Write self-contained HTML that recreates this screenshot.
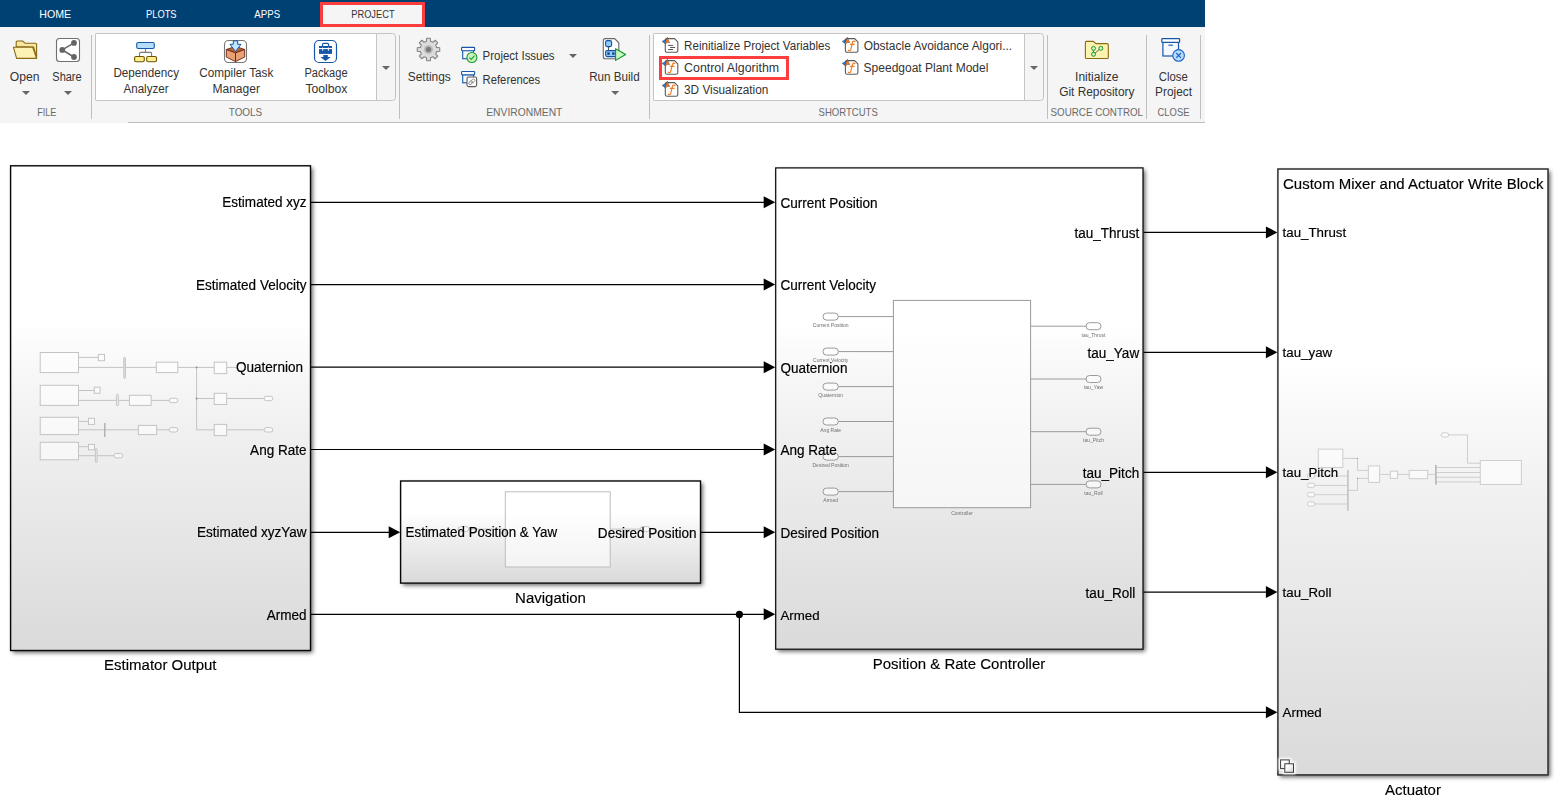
<!DOCTYPE html>
<html><head><meta charset="utf-8"><title>Project</title>
<style>
html,body{margin:0;padding:0;background:#fff;}
body{width:1563px;height:808px;overflow:hidden;font-family:"Liberation Sans",sans-serif;}
svg{position:absolute;left:0;top:0;display:block}
svg text{font-family:"Liberation Sans",sans-serif;}
</style></head><body>
<svg width="1563" height="808" viewBox="0 0 1563 808" style="will-change:transform">
<defs>
<linearGradient id="bg" x1="0" y1="0" x2="0" y2="1"><stop offset="0" stop-color="#fff"/><stop offset="0.32" stop-color="#fff"/><stop offset="0.45" stop-color="#f6f6f6"/><stop offset="0.57" stop-color="#efefef"/><stop offset="0.78" stop-color="#e5e5e5"/><stop offset="1" stop-color="#dadada"/></linearGradient>
<filter id="sh" x="-5%" y="-5%" width="115%" height="115%"><feDropShadow dx="2.2" dy="2.2" stdDeviation="2.1" flood-color="#000" flood-opacity="0.62"/></filter>
</defs>
<rect x="10.6" y="165.8" width="299.9" height="484.7" fill="url(#bg)" stroke="none" filter="url(#sh)"/>
<rect x="400.6" y="481.0" width="299.9" height="102.1" fill="url(#bg)" stroke="none" filter="url(#sh)"/>
<rect x="775.7" y="167.9" width="367.3" height="481.3" fill="url(#bg)" stroke="none" filter="url(#sh)"/>
<rect x="1277.9" y="169" width="270.1" height="605.9" fill="url(#bg)" stroke="none" filter="url(#sh)"/>
<g>
<path d="M78.5 357.4 H98.3" fill="none" stroke="#c4c4c4" stroke-width="1"/>
<path d="M78.5 367.4 H156.3" fill="none" stroke="#c4c4c4" stroke-width="1"/>
<path d="M177.8 367.4 H214.2" fill="none" stroke="#c4c4c4" stroke-width="1"/>
<path d="M226.7 367.4 H236" fill="none" stroke="#c4c4c4" stroke-width="1"/>
<path d="M196.6 367.4 V429.8" fill="none" stroke="#c4c4c4" stroke-width="1"/>
<path d="M196.6 398.5 H214.2" fill="none" stroke="#c4c4c4" stroke-width="1"/>
<path d="M226.7 398.5 H264.1" fill="none" stroke="#c4c4c4" stroke-width="1"/>
<path d="M196.6 429.8 H214.2" fill="none" stroke="#c4c4c4" stroke-width="1"/>
<path d="M226.7 429.8 H264.1" fill="none" stroke="#c4c4c4" stroke-width="1"/>
<path d="M78.5 390.5 H94.3" fill="none" stroke="#c4c4c4" stroke-width="1"/>
<path d="M78.5 400.4 H129.4" fill="none" stroke="#c4c4c4" stroke-width="1"/>
<path d="M151.1 400.4 H169.3" fill="none" stroke="#c4c4c4" stroke-width="1"/>
<path d="M78.5 421.4 H88.5" fill="none" stroke="#c4c4c4" stroke-width="1"/>
<path d="M78.5 429.8 H138.4" fill="none" stroke="#c4c4c4" stroke-width="1"/>
<path d="M156.7 429.8 H169.3" fill="none" stroke="#c4c4c4" stroke-width="1"/>
<path d="M78.5 446.7 H88.5" fill="none" stroke="#c4c4c4" stroke-width="1"/>
<path d="M78.5 455.7 H114" fill="none" stroke="#c4c4c4" stroke-width="1"/>
<rect x="40.2" y="352.5" width="38.3" height="20.1" rx="0" fill="rgba(255,255,255,0.55)" stroke="#c4c4c4" stroke-width="1"/>
<rect x="40.2" y="385.3" width="38.3" height="20.1" rx="0" fill="rgba(255,255,255,0.55)" stroke="#c4c4c4" stroke-width="1"/>
<rect x="40.2" y="417.3" width="38.3" height="17.3" rx="0" fill="rgba(255,255,255,0.55)" stroke="#c4c4c4" stroke-width="1"/>
<rect x="40.2" y="442.3" width="38.3" height="17.5" rx="0" fill="rgba(255,255,255,0.55)" stroke="#c4c4c4" stroke-width="1"/>
<rect x="98.3" y="354.4" width="6.2" height="6.3" rx="0" fill="rgba(255,255,255,0.55)" stroke="#c4c4c4" stroke-width="1"/>
<rect x="94.3" y="387.2" width="5.7" height="6.1" rx="0" fill="rgba(255,255,255,0.55)" stroke="#c4c4c4" stroke-width="1"/>
<rect x="88.5" y="418.3" width="6.0" height="6.1" rx="0" fill="rgba(255,255,255,0.55)" stroke="#c4c4c4" stroke-width="1"/>
<rect x="88.5" y="444.4" width="6.0" height="5.4" rx="0" fill="rgba(255,255,255,0.55)" stroke="#c4c4c4" stroke-width="1"/>
<rect x="156.3" y="362.2" width="21.5" height="10.4" rx="0" fill="rgba(255,255,255,0.55)" stroke="#c4c4c4" stroke-width="1"/>
<rect x="129.4" y="395.3" width="21.7" height="10.1" rx="0" fill="rgba(255,255,255,0.55)" stroke="#c4c4c4" stroke-width="1"/>
<rect x="138.4" y="425.4" width="18.3" height="9.2" rx="0" fill="rgba(255,255,255,0.55)" stroke="#c4c4c4" stroke-width="1"/>
<rect x="214.2" y="362.2" width="12.5" height="11.4" rx="0" fill="rgba(255,255,255,0.55)" stroke="#c4c4c4" stroke-width="1"/>
<rect x="214.2" y="393.3" width="12.5" height="11.2" rx="0" fill="rgba(255,255,255,0.55)" stroke="#c4c4c4" stroke-width="1"/>
<rect x="214.2" y="424.4" width="12.5" height="11.2" rx="0" fill="rgba(255,255,255,0.55)" stroke="#c4c4c4" stroke-width="1"/>
<rect x="123.8" y="357.3" width="1.6" height="21.1" rx="0.8" fill="#e4e4e4" stroke="#c4c4c4" stroke-width="1"/>
<rect x="116.4" y="394.3" width="2.0" height="11.5" rx="1" fill="#eee" stroke="#c4c4c4" stroke-width="1"/>
<path d="M104.8 423.1 V436.9" fill="none" stroke="#aaa" stroke-width="1.3"/>
<rect x="95.3" y="448.6" width="1.8" height="13.8" rx="0.9" fill="#eee" stroke="#c4c4c4" stroke-width="1"/>
<rect x="169.3" y="398.2" width="8.5" height="4.4" rx="2.2" fill="rgba(255,255,255,0.55)" stroke="#c4c4c4" stroke-width="1"/>
<rect x="169.3" y="427.6" width="8.5" height="4.4" rx="2.2" fill="rgba(255,255,255,0.55)" stroke="#c4c4c4" stroke-width="1"/>
<rect x="264.1" y="396.3" width="8.7" height="4.4" rx="2.2" fill="rgba(255,255,255,0.55)" stroke="#c4c4c4" stroke-width="1"/>
<rect x="264.1" y="427.6" width="8.7" height="4.4" rx="2.2" fill="rgba(255,255,255,0.55)" stroke="#c4c4c4" stroke-width="1"/>
<rect x="114.0" y="453.5" width="8.7" height="4.4" rx="2.2" fill="rgba(255,255,255,0.55)" stroke="#c4c4c4" stroke-width="1"/>
<circle cx="196.6" cy="367.4" r="0.9" fill="#888"/>
<circle cx="196.6" cy="398.5" r="0.9" fill="#888"/>
</g>
<path d="M468.6 529.1 H505.3" fill="none" stroke="#c4c4c4" stroke-width="1"/>
<path d="M610.2 529.1 H640.2" fill="none" stroke="#c4c4c4" stroke-width="1"/>
<rect x="458.0" y="526.6" width="10.6" height="5.0" rx="2.5" fill="rgba(255,255,255,0.55)" stroke="#c4c4c4" stroke-width="1"/>
<rect x="640.2" y="526.6" width="9.7" height="5.0" rx="2.5" fill="rgba(255,255,255,0.55)" stroke="#c4c4c4" stroke-width="1"/>
<rect x="505.3" y="491.8" width="104.9" height="75.2" rx="0" fill="rgba(255,255,255,0.6)" stroke="#bdbdbd" stroke-width="1"/>
<path d="M838.3 316.6 H893.4" fill="none" stroke="#9a9a9a" stroke-width="1"/>
<rect x="823.0" y="313.1" width="15.3" height="7.0" rx="3.5" fill="rgba(255,255,255,0.55)" stroke="#9a9a9a" stroke-width="1"/>
<path d="M838.3 351.6 H893.4" fill="none" stroke="#9a9a9a" stroke-width="1"/>
<rect x="823.0" y="348.1" width="15.3" height="7.0" rx="3.5" fill="rgba(255,255,255,0.55)" stroke="#9a9a9a" stroke-width="1"/>
<path d="M838.3 386.6 H893.4" fill="none" stroke="#9a9a9a" stroke-width="1"/>
<rect x="823.0" y="383.1" width="15.3" height="7.0" rx="3.5" fill="rgba(255,255,255,0.55)" stroke="#9a9a9a" stroke-width="1"/>
<path d="M838.3 421.5 H893.4" fill="none" stroke="#9a9a9a" stroke-width="1"/>
<rect x="823.0" y="418.0" width="15.3" height="7.0" rx="3.5" fill="rgba(255,255,255,0.55)" stroke="#9a9a9a" stroke-width="1"/>
<path d="M838.3 456.6 H893.4" fill="none" stroke="#9a9a9a" stroke-width="1"/>
<rect x="823.0" y="453.1" width="15.3" height="7.0" rx="3.5" fill="rgba(255,255,255,0.55)" stroke="#9a9a9a" stroke-width="1"/>
<path d="M838.3 491.6 H893.4" fill="none" stroke="#9a9a9a" stroke-width="1"/>
<rect x="823.0" y="488.1" width="15.3" height="7.0" rx="3.5" fill="rgba(255,255,255,0.55)" stroke="#9a9a9a" stroke-width="1"/>
<path d="M1030.6 326.2 H1086" fill="none" stroke="#9a9a9a" stroke-width="1"/>
<rect x="1086.0" y="322.7" width="15.0" height="7.0" rx="3.5" fill="rgba(255,255,255,0.55)" stroke="#9a9a9a" stroke-width="1"/>
<path d="M1030.6 379.0 H1086" fill="none" stroke="#9a9a9a" stroke-width="1"/>
<rect x="1086.0" y="375.5" width="15.0" height="7.0" rx="3.5" fill="rgba(255,255,255,0.55)" stroke="#9a9a9a" stroke-width="1"/>
<path d="M1030.6 431.7 H1086" fill="none" stroke="#9a9a9a" stroke-width="1"/>
<rect x="1086.0" y="428.2" width="15.0" height="7.0" rx="3.5" fill="rgba(255,255,255,0.55)" stroke="#9a9a9a" stroke-width="1"/>
<path d="M1030.6 484.4 H1086" fill="none" stroke="#9a9a9a" stroke-width="1"/>
<rect x="1086.0" y="480.9" width="15.0" height="7.0" rx="3.5" fill="rgba(255,255,255,0.55)" stroke="#9a9a9a" stroke-width="1"/>
<rect x="893.4" y="300.4" width="137.2" height="207.3" rx="0" fill="rgba(255,255,255,0.6)" stroke="#9a9a9a" stroke-width="1"/>
<text x="830.7" y="326.90000000000003" font-size="5" fill="#6f6f6f" text-anchor="middle">Current Position</text>
<text x="830.7" y="361.90000000000003" font-size="5" fill="#6f6f6f" text-anchor="middle">Current Velocity</text>
<text x="830.7" y="396.90000000000003" font-size="5" fill="#6f6f6f" text-anchor="middle">Quaternion</text>
<text x="830.7" y="431.8" font-size="5" fill="#6f6f6f" text-anchor="middle">Ang Rate</text>
<text x="830.7" y="466.90000000000003" font-size="5" fill="#6f6f6f" text-anchor="middle">Desired Position</text>
<text x="830.7" y="501.90000000000003" font-size="5" fill="#6f6f6f" text-anchor="middle">Armed</text>
<text x="1093.5" y="336.5" font-size="5" fill="#6f6f6f" text-anchor="middle">tau_Thrust</text>
<text x="1093.5" y="389.3" font-size="5" fill="#6f6f6f" text-anchor="middle">tau_Yaw</text>
<text x="1093.5" y="442.0" font-size="5" fill="#6f6f6f" text-anchor="middle">tau_Pitch</text>
<text x="1093.5" y="494.7" font-size="5" fill="#6f6f6f" text-anchor="middle">tau_Roll</text>
<text x="962" y="514.6" font-size="5" fill="#6f6f6f" text-anchor="middle">Controller</text>
<path d="M1342.8 458.4 H1357.5 V470.4 H1368.4" fill="none" stroke="#cecece" stroke-width="1"/>
<path d="M1347.9 490.4 H1357.5 V478.4 H1368.4" fill="none" stroke="#cecece" stroke-width="1"/>
<path d="M1314.8 476 H1347.9" fill="none" stroke="#cecece" stroke-width="1"/>
<rect x="1307.3" y="473.8" width="7.5" height="4.4" rx="2.2" fill="rgba(255,255,255,0.55)" stroke="#cecece" stroke-width="1"/>
<path d="M1314.8 485.4 H1347.9" fill="none" stroke="#cecece" stroke-width="1"/>
<rect x="1307.3" y="483.2" width="7.5" height="4.4" rx="2.2" fill="rgba(255,255,255,0.55)" stroke="#cecece" stroke-width="1"/>
<path d="M1314.8 494.7 H1347.9" fill="none" stroke="#cecece" stroke-width="1"/>
<rect x="1307.3" y="492.5" width="7.5" height="4.4" rx="2.2" fill="rgba(255,255,255,0.55)" stroke="#cecece" stroke-width="1"/>
<path d="M1314.8 504 H1347.9" fill="none" stroke="#cecece" stroke-width="1"/>
<rect x="1307.3" y="501.8" width="7.5" height="4.4" rx="2.2" fill="rgba(255,255,255,0.55)" stroke="#cecece" stroke-width="1"/>
<path d="M1347.9 470 V510.7" fill="none" stroke="#c0c0c0" stroke-width="1.5"/>
<path d="M1379.6 474.4 H1390.3" fill="none" stroke="#cecece" stroke-width="1"/>
<path d="M1397.6 474.4 H1409.2" fill="none" stroke="#cecece" stroke-width="1"/>
<path d="M1427.6 474.4 H1435.9" fill="none" stroke="#cecece" stroke-width="1"/>
<path d="M1435.9 467.5 H1480.3" fill="none" stroke="#cecece" stroke-width="1"/>
<path d="M1435.9 472.5 H1480.3" fill="none" stroke="#cecece" stroke-width="1"/>
<path d="M1435.9 477.3 H1480.3" fill="none" stroke="#cecece" stroke-width="1"/>
<path d="M1435.9 481.9 H1480.3" fill="none" stroke="#cecece" stroke-width="1"/>
<path d="M1435.9 465.1 V484.8" fill="none" stroke="#bcbcbc" stroke-width="1.8"/>
<path d="M1448.7 434.9 H1467.5 V463.2 H1480.3" fill="none" stroke="#cecece" stroke-width="1"/>
<rect x="1441.2" y="432.8" width="7.5" height="4.2" rx="2.1" fill="rgba(255,255,255,0.55)" stroke="#cecece" stroke-width="1"/>
<rect x="1318.3" y="449.1" width="24.5" height="18.4" rx="0" fill="rgba(255,255,255,0.55)" stroke="#cecece" stroke-width="1"/>
<rect x="1368.4" y="465.9" width="11.2" height="16.5" rx="0" fill="rgba(255,255,255,0.55)" stroke="#cecece" stroke-width="1"/>
<rect x="1390.3" y="471.2" width="7.3" height="7.2" rx="0" fill="rgba(255,255,255,0.55)" stroke="#cecece" stroke-width="1"/>
<rect x="1409.2" y="470.4" width="18.4" height="8.3" rx="0" fill="rgba(255,255,255,0.55)" stroke="#cecece" stroke-width="1"/>
<rect x="1480.3" y="460.5" width="41.1" height="24.0" rx="0" fill="rgba(255,255,255,0.55)" stroke="#cecece" stroke-width="1"/>
<circle cx="1357.5" cy="458.4" r="0.7" fill="#999"/>
<circle cx="1357.5" cy="478.4" r="0.7" fill="#999"/>
<rect x="10.6" y="165.8" width="299.9" height="484.7" fill="none" stroke="#060606" stroke-width="1.4"/>
<rect x="400.6" y="481.0" width="299.9" height="102.1" fill="none" stroke="#060606" stroke-width="1.4"/>
<rect x="775.7" y="167.9" width="367.3" height="481.3" fill="none" stroke="#0a0a0a" stroke-width="1.25"/>
<rect x="1277.9" y="169" width="270.1" height="605.9" fill="none" stroke="#2e2e2e" stroke-width="1.5"/>
<path d="M311 202.3 L765 202.3" stroke="#000" stroke-width="1.2" fill="none"/>
<path d="M775.2 202.3 l-11.5 -6 v12z" fill="#000"/>
<path d="M311 284.6 L765 284.6" stroke="#000" stroke-width="1.2" fill="none"/>
<path d="M775.2 284.6 l-11.5 -6 v12z" fill="#000"/>
<path d="M311 367.2 L765 367.2" stroke="#000" stroke-width="1.2" fill="none"/>
<path d="M775.2 367.2 l-11.5 -6 v12z" fill="#000"/>
<path d="M311 449.5 L765 449.5" stroke="#000" stroke-width="1.2" fill="none"/>
<path d="M775.2 449.5 l-11.5 -6 v12z" fill="#000"/>
<path d="M311 532.3 L390 532.3" stroke="#000" stroke-width="1.2" fill="none"/>
<path d="M400.2 532.3 l-11.5 -6 v12z" fill="#000"/>
<path d="M701 532.3 L765 532.3" stroke="#000" stroke-width="1.2" fill="none"/>
<path d="M775.2 532.3 l-11.5 -6 v12z" fill="#000"/>
<path d="M311 614.3 L765 614.3" stroke="#000" stroke-width="1.2" fill="none"/>
<path d="M775.2 614.3 l-11.5 -6 v12z" fill="#000"/>
<path d="M1143.5 232.4 L1267 232.4" stroke="#000" stroke-width="1.2" fill="none"/>
<path d="M1277.4 232.4 l-11.5 -6 v12z" fill="#000"/>
<path d="M1143.5 352.3 L1267 352.3" stroke="#000" stroke-width="1.2" fill="none"/>
<path d="M1277.4 352.3 l-11.5 -6 v12z" fill="#000"/>
<path d="M1143.5 472.3 L1267 472.3" stroke="#000" stroke-width="1.2" fill="none"/>
<path d="M1277.4 472.3 l-11.5 -6 v12z" fill="#000"/>
<path d="M1143.5 592.1 L1267 592.1" stroke="#000" stroke-width="1.2" fill="none"/>
<path d="M1277.4 592.1 l-11.5 -6 v12z" fill="#000"/>
<path d="M739.4 614.3 V712.3 H1267" stroke="#000" stroke-width="1.2" fill="none"/>
<path d="M1277.4 712.3 l-11.5 -6 v12z" fill="#000"/>
<circle cx="739.4" cy="614.4" r="3.6" fill="#000"/>
<text transform="translate(306.6 207.0) scale(1 1.03)" font-size="13.55" fill="#000" stroke="#000" stroke-width="0.18" text-anchor="end">Estimated xyz</text>
<text transform="translate(306.6 290.3) scale(1 1.03)" font-size="13.55" fill="#000" stroke="#000" stroke-width="0.18" text-anchor="end">Estimated Velocity</text>
<text transform="translate(303.0 371.9) scale(1 1.03)" font-size="13.55" fill="#000" stroke="#000" stroke-width="0.18" text-anchor="end">Quaternion</text>
<text transform="translate(306.6 455.1) scale(1 1.03)" font-size="13.55" fill="#000" stroke="#000" stroke-width="0.18" text-anchor="end">Ang Rate</text>
<text transform="translate(306.6 537.0) scale(1 1.03)" font-size="13.55" fill="#000" stroke="#000" stroke-width="0.18" text-anchor="end">Estimated xyzYaw</text>
<text transform="translate(306.6 620.0) scale(1 1.03)" font-size="13.55" fill="#000" stroke="#000" stroke-width="0.18" text-anchor="end">Armed</text>
<text transform="translate(780.4 208.4) scale(1 1.03)" font-size="13.55" fill="#000" stroke="#000" stroke-width="0.18" text-anchor="start">Current Position</text>
<text transform="translate(780.4 289.9) scale(1 1.03)" font-size="13.55" fill="#000" stroke="#000" stroke-width="0.18" text-anchor="start">Current Velocity</text>
<text transform="translate(780.4 373.3) scale(1 1.03)" font-size="13.55" fill="#000" stroke="#000" stroke-width="0.18" text-anchor="start">Quaternion</text>
<text transform="translate(780.4 454.6) scale(1 1.03)" font-size="13.55" fill="#000" stroke="#000" stroke-width="0.18" text-anchor="start">Ang Rate</text>
<text transform="translate(780.4 538.4) scale(1 1.03)" font-size="13.55" fill="#000" stroke="#000" stroke-width="0.18" text-anchor="start">Desired Position</text>
<text transform="translate(780.4 620.4) scale(1 1.03)" font-size="13.3" fill="#000" stroke="#000" stroke-width="0.18" text-anchor="start">Armed</text>
<text transform="translate(1139.2 237.8) scale(1 1.03)" font-size="13.55" fill="#000" stroke="#000" stroke-width="0.18" text-anchor="end">tau_Thrust</text>
<text transform="translate(1139.2 357.7) scale(1 1.03)" font-size="13.55" fill="#000" stroke="#000" stroke-width="0.18" text-anchor="end">tau_Yaw</text>
<text transform="translate(1139.2 477.7) scale(1 1.03)" font-size="13.55" fill="#000" stroke="#000" stroke-width="0.18" text-anchor="end">tau_Pitch</text>
<text transform="translate(1135.3 597.5) scale(1 1.03)" font-size="13.55" fill="#000" stroke="#000" stroke-width="0.18" text-anchor="end">tau_Roll</text>
<text transform="translate(1282.6 237.0) scale(1 1.03)" font-size="13.3" fill="#000" stroke="#000" stroke-width="0.18" text-anchor="start">tau_Thrust</text>
<text transform="translate(1282.6 356.9) scale(1 1.03)" font-size="13.3" fill="#000" stroke="#000" stroke-width="0.18" text-anchor="start">tau_yaw</text>
<text transform="translate(1282.6 476.9) scale(1 1.03)" font-size="13.3" fill="#000" stroke="#000" stroke-width="0.18" text-anchor="start">tau_Pitch</text>
<text transform="translate(1282.6 596.7) scale(1 1.03)" font-size="13.3" fill="#000" stroke="#000" stroke-width="0.18" text-anchor="start">tau_Roll</text>
<text transform="translate(1282.6 716.9) scale(1 1.03)" font-size="13.3" fill="#000" stroke="#000" stroke-width="0.18" text-anchor="start">Armed</text>
<text transform="translate(405.6 537.3) scale(1 1.03)" font-size="13.35" fill="#000" stroke="#000" stroke-width="0.18" text-anchor="start">Estimated Position &amp; Yaw</text>
<text transform="translate(696.5 537.6) scale(1 1.03)" font-size="13.55" fill="#000" stroke="#000" stroke-width="0.18" text-anchor="end">Desired Position</text>
<text transform="translate(160.3 669.6) scale(1 1.035)" font-size="15" fill="#000" stroke="#000" stroke-width="0.15" text-anchor="middle">Estimator Output</text>
<text transform="translate(550.5 602.8) scale(1 1.035)" font-size="15" fill="#000" stroke="#000" stroke-width="0.15" text-anchor="middle">Navigation</text>
<text transform="translate(959 669.3) scale(1 1.035)" font-size="15" fill="#000" stroke="#000" stroke-width="0.15" text-anchor="middle">Position &amp; Rate Controller</text>
<text transform="translate(1413 794.5) scale(1 1.035)" font-size="15" fill="#000" stroke="#000" stroke-width="0.15" text-anchor="middle">Actuator</text>
<text transform="translate(1283 188.7) scale(1 1.035)" font-size="15" fill="#000" stroke="#000" stroke-width="0.15">Custom Mixer and Actuator Write Block</text>
<defs><linearGradient id="ig" x1="0" y1="0" x2="1" y2="1"><stop offset="0.3" stop-color="#fff"/><stop offset="1" stop-color="#d4d4d4"/></linearGradient><filter id="gl" x="-30%" y="-30%" width="160%" height="160%"><feGaussianBlur stdDeviation="0.9"/></filter></defs>
<g filter="url(#gl)" fill="#fff" stroke="#fff" stroke-width="4"><rect x="1280.6" y="759.9" width="8.7" height="8.7"/><rect x="1284.8" y="763.8" width="8.7" height="8.5"/></g>
<g stroke="#3a3a3a" stroke-width="1"><rect x="1280.6" y="759.9" width="8.7" height="8.7" fill="url(#ig)"/><rect x="1284.8" y="763.8" width="8.7" height="8.5" fill="url(#ig)"/></g>
</svg>
<svg width="1205" height="124" viewBox="0 0 1205 124">
<rect x="0" y="0" width="1205" height="27" fill="#004173"/>
<rect x="0" y="27" width="1205" height="96" fill="#f5f5f5"/>
<rect x="128" y="122" width="1077" height="1" fill="#bebebe"/>
<rect x="321.5" y="3.5" width="102" height="22" fill="#f5f5f5" stroke="#fb3d3d" stroke-width="3"/><rect x="320" y="27" width="105" height="1" fill="#f5f5f5"/>
<text x="55.2" y="17.8" font-size="11.5" fill="#fff" text-anchor="middle" textLength="31.9" lengthAdjust="spacingAndGlyphs" >HOME</text>
<text x="161.3" y="17.8" font-size="11.5" fill="#fff" text-anchor="middle" textLength="30.6" lengthAdjust="spacingAndGlyphs" >PLOTS</text>
<text x="267.2" y="17.8" font-size="11.5" fill="#fff" text-anchor="middle" textLength="25.8" lengthAdjust="spacingAndGlyphs" >APPS</text>
<text x="372.9" y="18.2" font-size="11.5" fill="#333" text-anchor="middle" textLength="43.3" lengthAdjust="spacingAndGlyphs" >PROJECT</text>
<rect x="91.0" y="35" width="1" height="84" fill="#bfbfbf"/>
<rect x="399.0" y="35" width="1" height="84" fill="#bfbfbf"/>
<rect x="649.0" y="35" width="1" height="84" fill="#bfbfbf"/>
<rect x="1047.0" y="35" width="1" height="84" fill="#bfbfbf"/>
<rect x="1146.0" y="35" width="1" height="84" fill="#bfbfbf"/>
<rect x="1200.0" y="35" width="1" height="84" fill="#bfbfbf"/>
<path d="M96.5 33.5 H392.5 a3 3 0 0 1 3 3 V97.5 a3 3 0 0 1 -3 3 H96.5 a1 1 0 0 1 -1 -1 V34.5 a1 1 0 0 1 1 -1z" fill="#f5f5f5" stroke="#c4c4c4"/>
<path d="M96.5 33.5 H376.5 V100.5 H96.5 a1 1 0 0 1 -1 -1 V34.5 a1 1 0 0 1 1 -1z" fill="#fff" stroke="#c4c4c4"/>
<path d="M382.0 66 h8 l-4 4z" fill="#666"/>
<path d="M654.5 33.5 H1040.5 a3 3 0 0 1 3 3 V97.5 a3 3 0 0 1 -3 3 H654.5 a1 1 0 0 1 -1 -1 V34.5 a1 1 0 0 1 1 -1z" fill="#f5f5f5" stroke="#c4c4c4"/>
<path d="M654.5 33.5 H1024.5 V100.5 H654.5 a1 1 0 0 1 -1 -1 V34.5 a1 1 0 0 1 1 -1z" fill="#fff" stroke="#c4c4c4"/>
<path d="M1030.0 66 h8 l-4 4z" fill="#666"/>
<path d="M22 91 h8 l-4 4z" fill="#666"/>
<path d="M64 91 h8 l-4 4z" fill="#666"/>
<path d="M569 54 h8 l-4 4z" fill="#666"/>
<path d="M611.2 91 h8 l-4 4z" fill="#666"/>
<text x="24.6" y="80.7" font-size="12.3" fill="#333" text-anchor="middle" textLength="29.7" lengthAdjust="spacingAndGlyphs" >Open</text>
<text x="67.0" y="80.7" font-size="12.3" fill="#333" text-anchor="middle" textLength="29.3" lengthAdjust="spacingAndGlyphs" >Share</text>
<text x="146.2" y="76.7" font-size="12.3" fill="#333" text-anchor="middle" textLength="65.6" lengthAdjust="spacingAndGlyphs" >Dependency</text>
<text x="146.0" y="92.6" font-size="12.3" fill="#333" text-anchor="middle" textLength="45.0" lengthAdjust="spacingAndGlyphs" >Analyzer</text>
<text x="236.3" y="76.7" font-size="12.3" fill="#333" text-anchor="middle" textLength="74.1" lengthAdjust="spacingAndGlyphs" >Compiler Task</text>
<text x="236.2" y="92.6" font-size="12.3" fill="#333" text-anchor="middle" textLength="47.5" lengthAdjust="spacingAndGlyphs" >Manager</text>
<text x="326.0" y="76.7" font-size="12.3" fill="#333" text-anchor="middle" textLength="43.1" lengthAdjust="spacingAndGlyphs" >Package</text>
<text x="326.4" y="92.6" font-size="12.3" fill="#333" text-anchor="middle" textLength="42.0" lengthAdjust="spacingAndGlyphs" >Toolbox</text>
<text x="429.3" y="80.8" font-size="12.3" fill="#333" text-anchor="middle" textLength="43.0" lengthAdjust="spacingAndGlyphs" >Settings</text>
<text x="518.6" y="60.2" font-size="12.3" fill="#333" text-anchor="middle" textLength="72.0" lengthAdjust="spacingAndGlyphs" >Project Issues</text>
<text x="511.4" y="83.7" font-size="12.3" fill="#333" text-anchor="middle" textLength="57.6" lengthAdjust="spacingAndGlyphs" >References</text>
<text x="614.4" y="80.8" font-size="12.3" fill="#333" text-anchor="middle" textLength="50.5" lengthAdjust="spacingAndGlyphs" >Run Build</text>
<text x="757.2" y="49.9" font-size="12.3" fill="#333" text-anchor="middle" textLength="146.3" lengthAdjust="spacingAndGlyphs" >Reinitialize Project Variables</text>
<text x="731.6" y="71.8" font-size="12.3" fill="#333" text-anchor="middle" textLength="95.1" lengthAdjust="spacingAndGlyphs" >Control Algorithm</text>
<text x="726.2" y="93.8" font-size="12.3" fill="#333" text-anchor="middle" textLength="84.3" lengthAdjust="spacingAndGlyphs" >3D Visualization</text>
<text x="937.9" y="49.9" font-size="12.3" fill="#333" text-anchor="middle" textLength="148.5" lengthAdjust="spacingAndGlyphs" >Obstacle Avoidance Algori...</text>
<text x="926.0" y="71.8" font-size="12.3" fill="#333" text-anchor="middle" textLength="124.8" lengthAdjust="spacingAndGlyphs" >Speedgoat Plant Model</text>
<text x="1096.8" y="80.8" font-size="12.3" fill="#333" text-anchor="middle" textLength="43.5" lengthAdjust="spacingAndGlyphs" >Initialize</text>
<text x="1096.8" y="96.2" font-size="12.3" fill="#333" text-anchor="middle" textLength="75.3" lengthAdjust="spacingAndGlyphs" >Git Repository</text>
<text x="1173.3" y="80.8" font-size="12.3" fill="#333" text-anchor="middle" textLength="29.0" lengthAdjust="spacingAndGlyphs" >Close</text>
<text x="1173.5" y="96.2" font-size="12.3" fill="#333" text-anchor="middle" textLength="36.9" lengthAdjust="spacingAndGlyphs" >Project</text>
<text x="46.8" y="115.7" font-size="11.3" fill="#6a6a6a" text-anchor="middle" textLength="19.3" lengthAdjust="spacingAndGlyphs" >FILE</text>
<text x="245.5" y="115.7" font-size="11.3" fill="#6a6a6a" text-anchor="middle" textLength="33.5" lengthAdjust="spacingAndGlyphs" >TOOLS</text>
<text x="524.3" y="115.7" font-size="11.3" fill="#6a6a6a" text-anchor="middle" textLength="76.2" lengthAdjust="spacingAndGlyphs" >ENVIRONMENT</text>
<text x="848.2" y="115.7" font-size="11.3" fill="#6a6a6a" text-anchor="middle" textLength="59.2" lengthAdjust="spacingAndGlyphs" >SHORTCUTS</text>
<text x="1096.8" y="115.7" font-size="11.3" fill="#6a6a6a" text-anchor="middle" textLength="92.5" lengthAdjust="spacingAndGlyphs" >SOURCE CONTROL</text>
<text x="1173.5" y="115.7" font-size="11.3" fill="#6a6a6a" text-anchor="middle" textLength="31.9" lengthAdjust="spacingAndGlyphs" >CLOSE</text>
<rect x="660.5" y="57.5" width="127" height="21" fill="none" stroke="#fb3d3d" stroke-width="3"/>
<g stroke="#8a6a12" stroke-width="1.1" stroke-linejoin="round"><path d="M16.2 46.5 V42 a1 1 0 0 1 1 -1 h5.3 l2.6 2.2 h10.4 a1.1 1.1 0 0 1 1.1 1.1 V57.5 l-3 -10.5z" fill="#f7e7a0"/><path d="M13.4 47.2 H32.7 L36.6 58.4 H16.6z" fill="#fdf1b4"/></g>
<rect x="56.5" y="38.5" width="23" height="23" rx="3" fill="#fff" stroke="#707070" stroke-width="1.1"/>
<path d="M74 42.9 L62.2 49.9 L74 57" fill="none" stroke="#646464" stroke-width="1.5"/>
<circle cx="74" cy="42.9" r="2.9" fill="#646464"/>
<circle cx="62.3" cy="49.9" r="2.9" fill="#646464"/>
<circle cx="74" cy="57" r="2.9" fill="#646464"/>
<path d="M145.5 49 V52.4 M139.5 56 V53.4 a1 1 0 0 1 1 -1 H150.6 a1 1 0 0 1 1 1 V56" fill="none" stroke="#7a7a7a" stroke-width="1.1"/>
<rect x="136.7" y="42.5" width="17.6" height="6" rx="1.6" fill="#b5defc" stroke="#1758aa" stroke-width="1.1"/>
<rect x="134.6" y="56.5" width="9.7" height="5.2" rx="1.5" fill="#fff08c" stroke="#6e5200" stroke-width="1.1"/>
<rect x="146.7" y="56.5" width="9.8" height="5.2" rx="1.5" fill="#fff08c" stroke="#6e5200" stroke-width="1.1"/>
<rect x="224.5" y="40.5" width="22" height="22" rx="4" fill="#fff" stroke="#777" stroke-width="1.1"/>
<g stroke="#6b1d14" stroke-width="0.9" stroke-linejoin="round"><path d="M226.3 49.5 L235.5 46.4 L244.7 49.5 L235.5 52.8z" fill="#b86a32"/><path d="M226.3 49.5 L235.5 52.8 V61.6 L226.3 57z" fill="#e6a272"/><path d="M244.7 49.5 L235.5 52.8 V61.6 L244.7 57z" fill="#e6a272"/></g>
<path d="M233.3 40.9 H237.7 V44.3 H241 L235.5 51.5 L230 44.3 H233.3z" fill="#c2e6ff" stroke="#1656b0" stroke-width="1" stroke-linejoin="round"/>
<rect x="314.5" y="40.5" width="22" height="22" rx="4.5" fill="#fff" stroke="#1757a8" stroke-width="1.2"/>
<g fill="#1757a8"><rect x="319" y="46" width="13" height="2"/><rect x="319" y="49.1" width="13" height="4.8"/><rect x="322.2" y="47.5" width="1" height="3.2" fill="#fff"/><rect x="327.9" y="47.5" width="1" height="3.2" fill="#fff"/><path d="M323.3 55 h4.5 v1.9 h3 L325.5 61 L320.3 56.9 h3z"/></g>
<path d="M322.5 46 V44.6 a1.2 1.2 0 0 1 1.2 -1.2 h3.7 a1.2 1.2 0 0 1 1.2 1.2 V46" fill="none" stroke="#1757a8" stroke-width="1.1"/>
<path d="M426.42 41.36 L426.68 38.25 L430.32 38.25 L430.58 41.36 L432.79 42.28 L435.17 40.26 L437.74 42.83 L435.72 45.21 L436.64 47.42 L439.75 47.68 L439.75 51.32 L436.64 51.58 L435.72 53.79 L437.74 56.17 L435.17 58.74 L432.79 56.72 L430.58 57.64 L430.32 60.75 L426.68 60.75 L426.42 57.64 L424.21 56.72 L421.83 58.74 L419.26 56.17 L421.28 53.79 L420.36 51.58 L417.25 51.32 L417.25 47.68 L420.36 47.42 L421.28 45.21 L419.26 42.83 L421.83 40.26 L424.21 42.28z" fill="#dcdcdc" stroke="#858585" stroke-width="1.1" stroke-linejoin="round"/>
<circle cx="428.5" cy="49.5" r="4.6" fill="#bdbdbd"/><circle cx="428.5" cy="49.5" r="2.7" fill="#7c7c7c"/>
<rect x="462.7" y="50.5" width="10.8" height="8.2" fill="#f4f8ff" stroke="#1757a8" stroke-width="1.1"/>
<rect x="461.6" y="47.4" width="13" height="3.4" rx="0.6" fill="#fff" stroke="#1757a8" stroke-width="1.1"/>
<circle cx="471.9" cy="57.5" r="5" fill="#c6f3be" stroke="#1f9a31" stroke-width="1.1"/>
<path d="M469.4 57.7 L471.2 59.5 L474.5 55.6" fill="none" stroke="#1f9a31" stroke-width="1.1"/>
<rect x="462.7" y="74.6" width="10.8" height="8.2" fill="#f4f8ff" stroke="#1757a8" stroke-width="1.1"/>
<rect x="461.6" y="71.5" width="13" height="3.4" rx="0.6" fill="#fff" stroke="#1757a8" stroke-width="1.1"/>
<rect x="467" y="77" width="9.6" height="9.6" rx="1.6" fill="#fff" stroke="#5a5a5a" stroke-width="1.1"/>
<g transform="rotate(-40 471.8 81.8)" fill="none" stroke="#8a8a8a" stroke-width="0.9"><rect x="468.2" y="80.4" width="4.4" height="2.8" rx="1.4"/><rect x="471" y="80.4" width="4.4" height="2.8" rx="1.4"/></g>
<path d="M605.3 38.6 H614.6 L618.8 42.8 V56.8 a2 2 0 0 1 -2 2 H605.3 a2 2 0 0 1 -2 -2 V40.6 a2 2 0 0 1 2 -2z" fill="#fff" stroke="#686868" stroke-width="1.1"/>
<path d="M608.5 46.5 V50.5" stroke="#555" stroke-width="1.1"/>
<rect x="605.6" y="40.6" width="6" height="6" rx="1.6" fill="#8fcdff" stroke="#15509e" stroke-width="1.1"/>
<rect x="605.6" y="50.6" width="11.5" height="6" rx="1.6" fill="#8fcdff" stroke="#15509e" stroke-width="1.1"/>
<rect x="607.3" y="52.4" width="2.4" height="2.4" fill="#123f85"/><rect x="612.2" y="52.4" width="2.4" height="2.4" fill="#123f85"/>
<path d="M615.6 48.7 V60.4 L625.6 54.5z" fill="#c8f9c2" stroke="#10942a" stroke-width="1.1" stroke-linejoin="round"/>
<path d="M667.1 38.6 H674.5 L677.8000000000001 41.9 V50.5 a1.8 1.8 0 0 1 -1.8 1.8 H667.1 a1.8 1.8 0 0 1 -1.8 -1.8 V40.4 a1.8 1.8 0 0 1 1.8 -1.8z" fill="#fff" stroke="#5a5a5a" stroke-width="1.1"/>
<path d="M668.1 45.4 h5 M670.1 47.5 h5 M668.1 49.5 h5" stroke="#555" stroke-width="1"/>
<path transform="translate(665.1 38.1)" d="M-3 3.4 L1.6 0.5 L-0.3 5.2z" fill="#1e82e8" stroke="#2a3a55" stroke-width="0.45" stroke-linejoin="round"/>
<path transform="translate(665.1 38.1)" d="M2.3 -1 L1.6 0.5 L-0.3 5.2 L0.3 5.8 L2.6 4.2 L4.6 4.6 L3.2 1.9z" fill="#f47920" stroke="#4a3a30" stroke-width="0.45" stroke-linejoin="round"/>
<path d="M667.1 60.6 H674.5 L677.8000000000001 63.9 V72.5 a1.8 1.8 0 0 1 -1.8 1.8 H667.1 a1.8 1.8 0 0 1 -1.8 -1.8 V62.4 a1.8 1.8 0 0 1 1.8 -1.8z" fill="#fff" stroke="#5a5a5a" stroke-width="1.1"/>
<path transform="translate(665.1 60.1)" d="M9.8 3.5 C9.2 2.7 7.8 2.7 7.3 4.4 L5.7 11 C5.3 12.7 4 12.9 3 12 M5.2 6.2 H9" fill="none" stroke="#f47920" stroke-width="1.15" stroke-linecap="round"/>
<path transform="translate(665.1 60.1)" d="M-3 3.4 L1.6 0.5 L-0.3 5.2z" fill="#1e82e8" stroke="#2a3a55" stroke-width="0.45" stroke-linejoin="round"/>
<path transform="translate(665.1 60.1)" d="M2.3 -1 L1.6 0.5 L-0.3 5.2 L0.3 5.8 L2.6 4.2 L4.6 4.6 L3.2 1.9z" fill="#f47920" stroke="#4a3a30" stroke-width="0.45" stroke-linejoin="round"/>
<path d="M667.1 82.6 H674.5 L677.8000000000001 85.89999999999999 V94.5 a1.8 1.8 0 0 1 -1.8 1.8 H667.1 a1.8 1.8 0 0 1 -1.8 -1.8 V84.39999999999999 a1.8 1.8 0 0 1 1.8 -1.8z" fill="#fff" stroke="#5a5a5a" stroke-width="1.1"/>
<path transform="translate(665.1 82.1)" d="M9.8 3.5 C9.2 2.7 7.8 2.7 7.3 4.4 L5.7 11 C5.3 12.7 4 12.9 3 12 M5.2 6.2 H9" fill="none" stroke="#f47920" stroke-width="1.15" stroke-linecap="round"/>
<path transform="translate(665.1 82.1)" d="M-3 3.4 L1.6 0.5 L-0.3 5.2z" fill="#1e82e8" stroke="#2a3a55" stroke-width="0.45" stroke-linejoin="round"/>
<path transform="translate(665.1 82.1)" d="M2.3 -1 L1.6 0.5 L-0.3 5.2 L0.3 5.8 L2.6 4.2 L4.6 4.6 L3.2 1.9z" fill="#f47920" stroke="#4a3a30" stroke-width="0.45" stroke-linejoin="round"/>
<path d="M847.2 38.6 H854.6 L857.9000000000001 41.9 V50.5 a1.8 1.8 0 0 1 -1.8 1.8 H847.2 a1.8 1.8 0 0 1 -1.8 -1.8 V40.4 a1.8 1.8 0 0 1 1.8 -1.8z" fill="#fff" stroke="#5a5a5a" stroke-width="1.1"/>
<path transform="translate(845.2 38.1)" d="M9.8 3.5 C9.2 2.7 7.8 2.7 7.3 4.4 L5.7 11 C5.3 12.7 4 12.9 3 12 M5.2 6.2 H9" fill="none" stroke="#f47920" stroke-width="1.15" stroke-linecap="round"/>
<path transform="translate(845.2 38.1)" d="M-3 3.4 L1.6 0.5 L-0.3 5.2z" fill="#1e82e8" stroke="#2a3a55" stroke-width="0.45" stroke-linejoin="round"/>
<path transform="translate(845.2 38.1)" d="M2.3 -1 L1.6 0.5 L-0.3 5.2 L0.3 5.8 L2.6 4.2 L4.6 4.6 L3.2 1.9z" fill="#f47920" stroke="#4a3a30" stroke-width="0.45" stroke-linejoin="round"/>
<path d="M847.2 60.6 H854.6 L857.9000000000001 63.9 V72.5 a1.8 1.8 0 0 1 -1.8 1.8 H847.2 a1.8 1.8 0 0 1 -1.8 -1.8 V62.4 a1.8 1.8 0 0 1 1.8 -1.8z" fill="#fff" stroke="#5a5a5a" stroke-width="1.1"/>
<path transform="translate(845.2 60.1)" d="M9.8 3.5 C9.2 2.7 7.8 2.7 7.3 4.4 L5.7 11 C5.3 12.7 4 12.9 3 12 M5.2 6.2 H9" fill="none" stroke="#f47920" stroke-width="1.15" stroke-linecap="round"/>
<path transform="translate(845.2 60.1)" d="M-3 3.4 L1.6 0.5 L-0.3 5.2z" fill="#1e82e8" stroke="#2a3a55" stroke-width="0.45" stroke-linejoin="round"/>
<path transform="translate(845.2 60.1)" d="M2.3 -1 L1.6 0.5 L-0.3 5.2 L0.3 5.8 L2.6 4.2 L4.6 4.6 L3.2 1.9z" fill="#f47920" stroke="#4a3a30" stroke-width="0.45" stroke-linejoin="round"/>
<path d="M1085.4 42.4 a1 1 0 0 1 1 -1 H1093.2 L1096 43.6 H1107.2 a1.1 1.1 0 0 1 1.1 1.1 V57.4 a1.1 1.1 0 0 1 -1.1 1.1 H1086.5 a1.1 1.1 0 0 1 -1.1 -1.1z" fill="#fdf2b0" stroke="#8a6a12" stroke-width="1.1"/>
<path d="M1093.5 48.7 V54 M1093.7 54.3 L1100.6 48.4" stroke="#666" stroke-width="1" fill="none"/>
<circle cx="1093.5" cy="48.4" r="2" fill="#c9f5c0" stroke="#1f9a31" stroke-width="1"/>
<circle cx="1100.8" cy="48.3" r="2" fill="#c9f5c0" stroke="#1f9a31" stroke-width="1"/>
<circle cx="1093.5" cy="54.3" r="2" fill="#c9f5c0" stroke="#1f9a31" stroke-width="1"/>
<rect x="1162.9" y="42" width="15.6" height="14" fill="#f4f8ff" stroke="#1757a8" stroke-width="1.2"/>
<rect x="1161.8" y="38.6" width="17.8" height="3.8" rx="0.6" fill="#fff" stroke="#1757a8" stroke-width="1.2"/>
<path d="M1168.4 45.2 h4.5" stroke="#1757a8" stroke-width="1.1"/>
<circle cx="1178.6" cy="55.4" r="5.8" fill="#b5dcff" stroke="#1b62c0" stroke-width="1.1"/>
<path d="M1176.2 53 l4.8 4.8 M1181 53 l-4.8 4.8" stroke="#1b62c0" stroke-width="1.1"/>
</svg>
</body></html>
